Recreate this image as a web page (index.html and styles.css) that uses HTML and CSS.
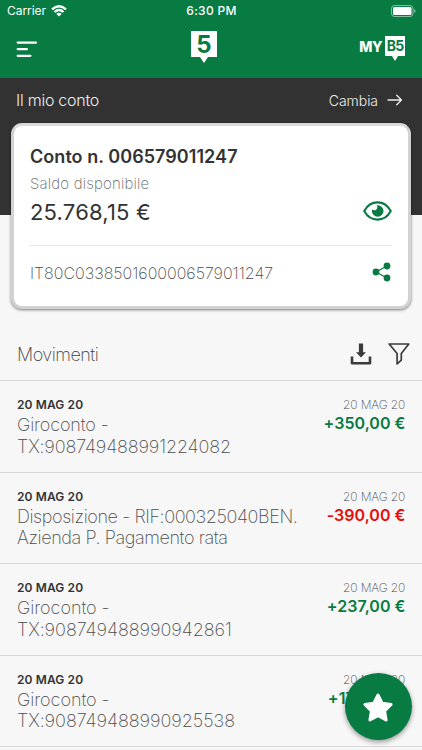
FILE: index.html
```html
<!DOCTYPE html>
<html lang="it">
<head>
<meta charset="utf-8">
<meta name="viewport" content="width=device-width, initial-scale=1">
<title>Il mio conto</title>
<link rel="stylesheet" href="styles.css">
</head>
<body>
<div class="app">
  <header class="header">
    <div class="status">
      <div class="carrier"><span class="carrier-name">Carrier</span>
        <svg class="wifi" width="16" height="12" viewBox="0 0 16 12"><g fill="none" stroke="#fff" stroke-width="2.3"><path d="M1 4.400Q8-2 15 4.400"/><path d="M3.500 7Q8 3 12.500 7"/></g><path d="M5.300 8.800Q8 6.600 10.700 8.800L8 11.500z" fill="#fff"/></svg>
      </div>
      <span class="time">6:30 PM</span>
      <svg class="battery" width="25" height="12" viewBox="0 0 25 12"><rect x=".5" y=".5" width="21.5" height="11" rx="3" fill="none" stroke="#fff" stroke-opacity=".5"/><rect x="2" y="2" width="18.5" height="8" rx="1.5" fill="#fff"/><path d="M23.2 4v4q1.4-.5 1.4-2t-1.4-2" fill="#fff" opacity=".5"/></svg>
    </div>
    <nav class="nav">
      <svg class="menu" width="22" height="18" viewBox="0 0 22 18" stroke="#fff" stroke-width="2.2" stroke-linecap="round"><path d="M1.700 2.600h18.300M1.700 9.200h9.200M1.700 15.800h12.700"/></svg>
      <div class="logo"><span class="logo-five">5</span></div>
      <div class="myb5"><span class="my">MY</span><span class="b5">B5</span></div>
    </nav>
  </header>
  <main>
    <section class="account">
      <div class="account-bar">
        <h1 class="account-title">Il mio conto</h1>
        <a class="change"><span>Cambia</span><svg width="16" height="12" viewBox="0 0 16 12" fill="none" stroke="#eee" stroke-width="1.3" stroke-linecap="round" stroke-linejoin="round"><path d="M1 6h13.500M9.700 1.200 14.500 6l-4.800 4.800"/></svg></a>
      </div>
      <div class="card">
        <h2 class="number">Conto n. 006579011247</h2>
        <p class="label">Saldo disponibile</p>
        <div class="balance-row">
          <span class="balance">25.768,15 €</span>
          <svg class="eye" width="29" height="20" viewBox="0 0 29 20"><path d="M1.200 10C7.500-1.500 21.500-1.500 27.800 10 21.500 21.500 7.500 21.500 1.200 10z" fill="none" stroke="#087b43" stroke-width="2.1" stroke-linejoin="round"/><path d="M14.700 4.200A5.800 5.800 0 1 1 8.900 10q0-.8.3-1.500 2 1.500 3.900.2 2.100-1.800.6-4.400z" fill="#087b43"/></svg>
        </div>
        <div class="iban-row">
          <span class="iban">IT80C0338501600006579011247</span>
          <svg class="share" width="19" height="20" viewBox="0 0 19 20"><path d="M15 4 4 10l11 6" fill="none" stroke="#087b43" stroke-width="1.2"/><g fill="#087b43"><circle cx="4" cy="10" r="3.4"/><circle cx="15" cy="4" r="3.4"/><circle cx="15" cy="16" r="3.4"/></g></svg>
        </div>
      </div>
    </section>
    <section class="movements">
      <div class="movements-head">
        <h2 class="movements-title">Movimenti</h2>
        <div class="tools">
          <svg width="22" height="23" viewBox="0 0 22 23"><path d="M2 14.500v6.700h18v-6.700" fill="none" stroke="#3b3b3b" stroke-width="2.600" stroke-linejoin="round"/><path d="M8.900 1.500h4.200v8.700H16l-5 5.200-5-5.200h2.900z" fill="#3b3b3b"/></svg>
          <svg width="22" height="23" viewBox="0 0 22 23"><path d="M1.200 2h19.600L13.300 11.500v6.600l-4.200 3.800V11.500z" fill="none" stroke="#3b3b3b" stroke-width="1.700" stroke-linejoin="round"/></svg>
        </div>
      </div>
      <ul class="list">
        <li class="row"><div><div class="date">20 MAG 20</div><p class="desc">Giroconto -<br>TX:908749488991224082</p></div><div class="side"><div class="value-date">20 MAG 20</div><div class="amount">+350,00 €</div></div></li>
        <li class="row"><div><div class="date">20 MAG 20</div><p class="desc prose">Disposizione - RIF:000325040BEN.<br>Azienda P. Pagamento rata</p></div><div class="side"><div class="value-date">20 MAG 20</div><div class="amount negative">-390,00 €</div></div></li>
        <li class="row"><div><div class="date">20 MAG 20</div><p class="desc loose">Giroconto -<br>TX:908749488990942861</p></div><div class="side"><div class="value-date">20 MAG 20</div><div class="amount">+237,00 €</div></div></li>
        <li class="row"><div><div class="date">20 MAG 20</div><p class="desc loose">Giroconto -<br>TX:908749488990925538</p></div><div class="side"><div class="value-date">20 MAG 20</div><div class="amount">+170,00 €</div></div></li>
      </ul>
    </section>
  </main>
  <button class="fab" aria-label="Preferiti"><svg width="34" height="32" viewBox="0 0 34 32"><path d="m17 4 4.100 8.200 9 1.300-6.500 6.400 1.500 9L17 24.700l-8.100 4.200 1.500-9L3.900 13.500l9-1.300z" fill="#fff" stroke="#fff" stroke-width="3" stroke-linejoin="round"/></svg></button>
</div>
</body>
</html>
```
FILE: styles.css
```css
* { box-sizing: border-box; }
body, h1, h2, p, ul { margin: 0; padding: 0; font-weight: inherit; }
body { font-family: Inter, "Liberation Sans", sans-serif; background: #f7f7f7; color: #333; }
svg { display: block; flex: none; }
.app { position: relative; width: 422px; height: 750px; overflow: hidden; }
.header { height: 78px; background: #087b43; color: #fff; }
.status { display: grid; grid-template-columns: 1fr auto 1fr; align-items: center; height: 21px; padding: 0 6px 0 7px; font-size: 12px; }
.carrier { display: flex; align-items: center; gap: 5px; }
.carrier-name { letter-spacing: -.05px; }
.time { font-weight: 500; letter-spacing: .3px; }
.battery { justify-self: end; }
.nav { display: grid; grid-template-columns: 175px 26px 1fr; height: 57px; padding: 0 17px 0 16px; }
.menu { margin-top: 19px; }
.logo { width: 26px; height: 32px; margin-top: 10px; background: #fff; border-radius: 1px; clip-path: polygon(0 0, 100% 0, 100% 26px, 17px 26px, 13px 32px, 9px 26px, 0 26px); text-align: center; color: #087b43; }
.logo-five { display: block; font: 700 24px/27px Inter, sans-serif; }
.myb5 { justify-self: end; display: flex; align-items: flex-start; gap: 3px; margin-top: 15px; }
.my { font: 800 14px/21px Inter, sans-serif; letter-spacing: -.5px; }
.b5 { width: 20px; height: 25px; background: #fff; color: #087b43; font: 700 14px/20px Inter, sans-serif; text-align: center; letter-spacing: -.9px; clip-path: polygon(0 0, 100% 0, 100% 20px, 13px 20px, 10px 25px, 7px 20px, 0 20px); }
.account { height: 242px; padding: 0 11px; background: linear-gradient(#323232 137px, #f7f7f7 137px); }
.account-bar { display: flex; justify-content: space-between; align-items: center; height: 45px; padding: 0 8px 1px 5px; color: #eee; }
.account-title { font-size: 16px; font-weight: 300; letter-spacing: -.25px; }
.change { display: flex; align-items: center; gap: 9px; font-size: 14px; font-weight: 300; letter-spacing: -.05px; }
.card { height: 186px; padding: 19px 16px 0; border: 3px solid #d2d2d2; border-top-color: #dadada; border-radius: 11px; background: #fff; box-shadow: 0 1px 3px rgba(0,0,0,.5); }
.number { font-size: 18px; line-height: 24px; font-weight: 600; letter-spacing: .05px; }
.label { margin-top: 5px; font-size: 15px; line-height: 20px; font-weight: 200; color: #666; letter-spacing: .17px; }
.balance-row { display: flex; justify-content: space-between; height: 52px; border-bottom: 1px solid #e4e4e4; }
.balance { font-size: 22px; line-height: 37px; letter-spacing: .2px; }
.eye { margin-top: 7px; }
.iban-row { display: flex; justify-content: space-between; align-items: center; height: 54px; }
.iban { font-size: 16px; font-weight: 200; color: #4a4a4a; }
.share { margin: -2px 1px 0 0; }
.movements-head { display: flex; justify-content: space-between; height: 60px; padding: 22px 12px 0 17px; }
.movements-title { font-size: 18px; line-height: 25px; font-weight: 200; color: #3d3d3d; letter-spacing: -.5px; }
.tools { display: flex; gap: 16px; }
.list { list-style: none; }
.row { display: flex; justify-content: space-between; height: 91.6px; padding: 15px 17px 0; border-top: 1px solid #d9d9d9; }
.list .row:last-child { border-bottom: 1px solid #d9d9d9; height: 92.6px; }
.date { font-size: 12px; line-height: 17px; font-weight: 600; letter-spacing: .12px; }
.desc { padding-top: 1px; font-size: 18px; line-height: 21.5px; font-weight: 200; color: #4d4d4d; letter-spacing: -.14px; white-space: nowrap; }
.desc.prose { letter-spacing: -.41px; }
.desc.loose { letter-spacing: -.05px; }
.side { text-align: right; white-space: nowrap; }
.value-date { font-size: 12px; line-height: 17px; font-weight: 200; color: #4d4d4d; letter-spacing: -.15px; }
.amount { margin-right: -.5px; font-size: 16px; line-height: 20px; font-weight: 600; color: #087b43; letter-spacing: .04px; }
.negative { color: #e60c0c; }
.fab { position: absolute; left: 345px; top: 673px; width: 67px; height: 67px; display: flex; justify-content: center; align-items: center; padding: 0 2px 0 0; border: 0; border-radius: 50%; background: #087b43; box-shadow: 0 2px 5px rgba(0,0,0,.4); }
```
